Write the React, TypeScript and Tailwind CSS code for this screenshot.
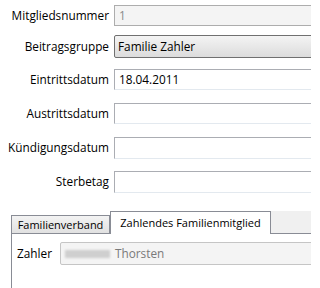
import React from 'react'

const labelCls = 'w-[109px] shrink-0 text-right whitespace-nowrap'

function Row({ label, className, children }: { label: string; className?: string; children: React.ReactNode }) {
  return (
    <div className={`flex items-center ${className ?? ''}`}>
      <span className={labelCls}>{label}</span>
      <div className="ml-[5px] w-[220px] shrink-0">{children}</div>
    </div>
  )
}

export default function App() {
  return (
    <div className="w-[311px] h-[288px] overflow-hidden bg-white font-['Open_Sans',sans-serif] text-[11.8px] leading-none text-black">
      <div className="pt-[5px]">
        <Row label="Mitgliedsnummer">
          <div className="flex h-[21px] items-center border border-[#adadad] bg-[#f4f4f4] px-[4px] text-[#8a8a8a]">1</div>
        </Row>

        <Row label="Beitragsgruppe" className="mt-[9px]">
          <div className="flex h-[23px] items-center rounded-[2px] border border-[#707070] bg-gradient-to-b from-[#f4f4f4] to-[#dcdcdc] px-[3px]">
            Familie Zahler
          </div>
        </Row>

        <Row label="Eintrittsdatum" className="mt-[11px]">
          <div className="flex h-[21px] items-center border border-[#abadb3] border-b-[#e3e9ef] bg-white px-[4px]">18.04.2011</div>
        </Row>

        <Row label="Austrittsdatum" className="mt-[13px]">
          <div className="h-[21px] border border-[#abadb3] border-b-[#e3e9ef] bg-white" />
        </Row>

        <Row label="Kündigungsdatum" className="mt-[13px]">
          <div className="h-[22px] border border-[#abadb3] border-b-[#e3e9ef] bg-white" />
        </Row>

        <Row label="Sterbetag" className="mt-[12px]">
          <div className="h-[22px] border border-[#abadb3] border-b-[#e3e9ef] bg-white" />
        </Row>
      </div>

      {/* Tabs */}
      <div className="ml-[11px] mt-[18px] w-[320px]">
        <div className="relative z-10 -mb-px flex h-[23px] items-end text-[11px]">
          <div className="flex h-[19px] w-[99px] shrink-0 items-center justify-center whitespace-nowrap border border-[#898c95] bg-gradient-to-b from-[#f3f3f3] to-[#e1e1e1]">
            Familienverband
          </div>
          <div className="flex h-[23px] w-[161px] shrink-0 items-center justify-center whitespace-nowrap border border-b-0 border-[#898c95] bg-white pb-[2px]">
            Zahlendes Familienmitglied
          </div>
          <div className="h-[23px] flex-1 border-b border-[#898c95] bg-[#f0f0f0]" />
        </div>
        <div className="h-[60px] border-l border-t border-[#898c95] bg-white">
          <div className="flex items-center pl-[5px] pt-[8px]">
            <span>Zahler</span>
            <div className="ml-[8px] flex h-[23px] w-[270px] items-center rounded-[2px] border border-[#c5c5c5] bg-[#f4f4f4] px-[4px] text-[#7a7a7a]">
              <span className="h-[8px] w-[45px] bg-[#cfcfcf] blur-[1px]" />
              <span className="ml-[5px]">Thorsten</span>
            </div>
          </div>
        </div>
      </div>
    </div>
  )
}
